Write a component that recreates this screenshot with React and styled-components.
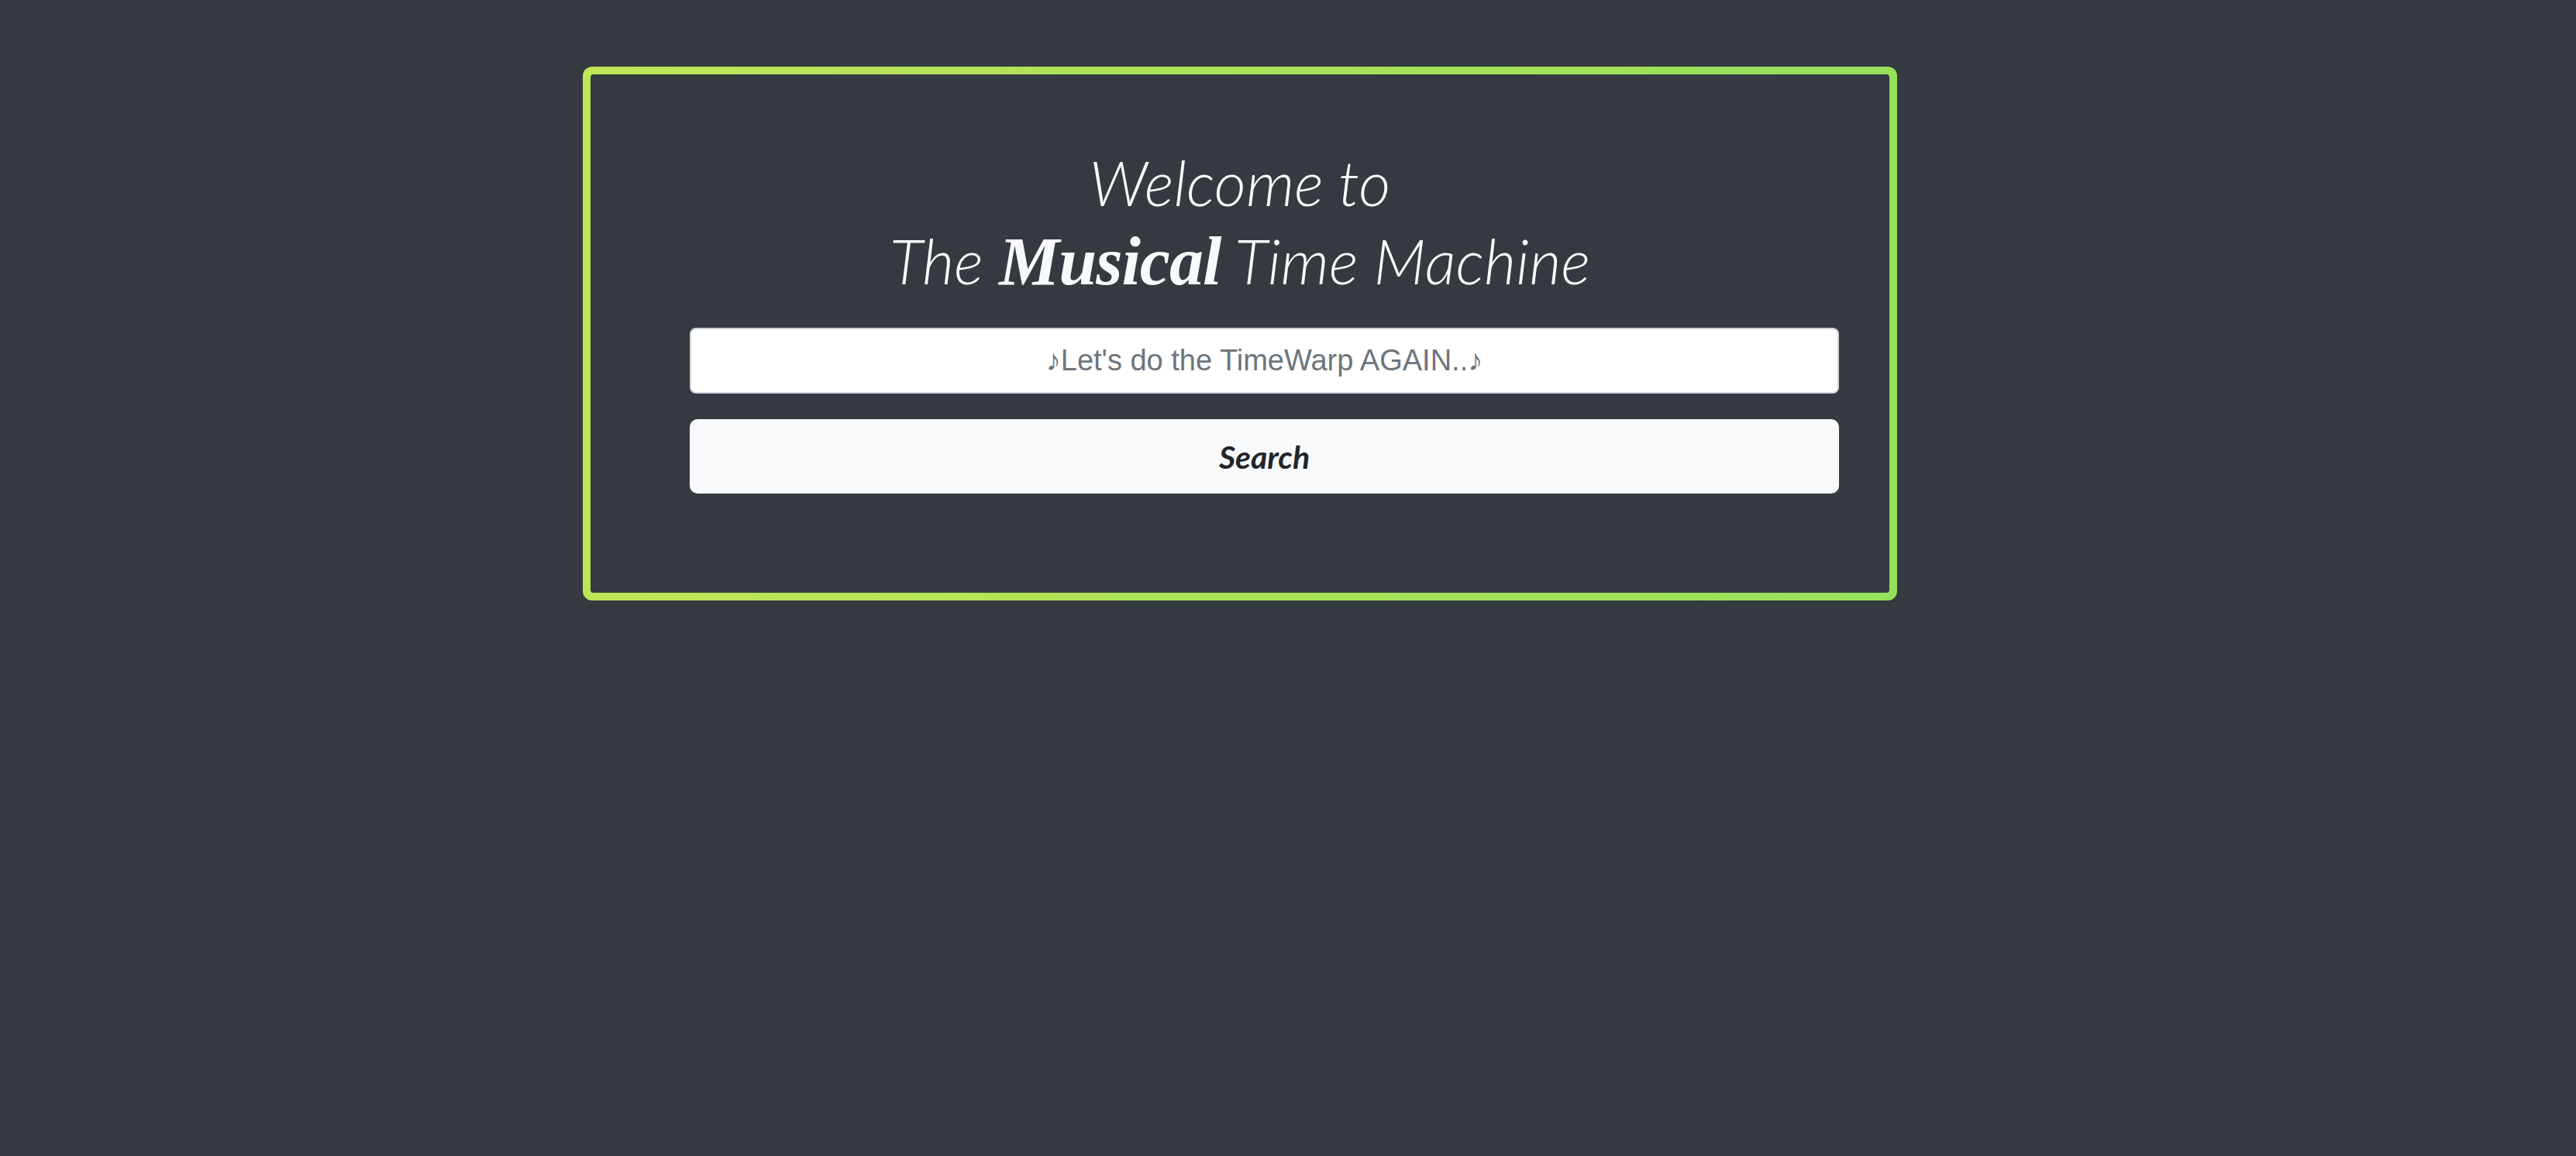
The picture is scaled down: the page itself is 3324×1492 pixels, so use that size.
import React from 'react';
import styled, { createGlobalStyle } from 'styled-components';

const GlobalStyle = createGlobalStyle`
	html, body {
		margin: 0;
		padding: 0;
		background: #343a40;
	}
	body {
		min-height: 100vh;
		font-family: "Liberation Sans", Arial, sans-serif;
	}
	* {
		box-sizing: border-box;
	}
`;

const Page = styled.div`
	min-height: 100vh;
	padding: 86px 0 0 752px;
`;

const Frame = styled.div`
	width: 1696px;
	height: 689px;
	padding: 10px;
	border-radius: 12px;
	background: linear-gradient(90deg, #c0e556, #96e05a);
`;

const Panel = styled.div`
	height: 100%;
	border-radius: 4px;
	background: #343a40;
	padding-top: 89px;
`;

const Title = styled.h1`
	margin: 0;
	text-align: center;
	color: #f8f9fa;
	font-family: "Lato", "Inter", sans-serif;
	font-weight: 300;
	font-style: italic;
	font-size: 80px;
	line-height: 101px;
`;

const Line = styled.span`
	display: block;
`;

const Script = styled.span`
	font-family: "Liberation Serif", "DejaVu Serif", serif;
	font-weight: 700;
	font-style: italic;
	font-size: 88px;
	letter-spacing: -1px;
`;

const Form = styled.form`
	display: flex;
	flex-direction: column;
	gap: 33px;
	margin: 35px 65px 0 128px;
`;

const Input = styled.input`
	height: 85px;
	width: 100%;
	border: 2px solid #ced4da;
	border-radius: 8px;
	background: #fff;
	text-align: center;
	font-family: "Liberation Sans", Arial, sans-serif;
	font-size: 38px;
	color: #495057;
	outline: none;

	&::placeholder {
		color: #6c757d;
	}
`;

const Button = styled.button`
	height: 96px;
	width: 100%;
	border: none;
	border-radius: 10px;
	background: #f8f9fa;
	color: #212529;
	font-family: "Lato", "Open Sans", sans-serif;
	font-weight: 700;
	font-style: italic;
	font-size: 41px;
	cursor: pointer;
`;

function App() {
	return (
		<Page>
			<GlobalStyle />
			<Frame>
				<Panel>
					<Title>
						<Line>Welcome to</Line>
						<Line>
							The <Script>Musical</Script> Time Machine
						</Line>
					</Title>
					<Form onSubmit={(e) => e.preventDefault()}>
						<Input type="text" placeholder="♪Let's do the TimeWarp AGAIN..♪" />
						<Button type="submit">Search</Button>
					</Form>
				</Panel>
			</Frame>
		</Page>
	);
}

export default App;
